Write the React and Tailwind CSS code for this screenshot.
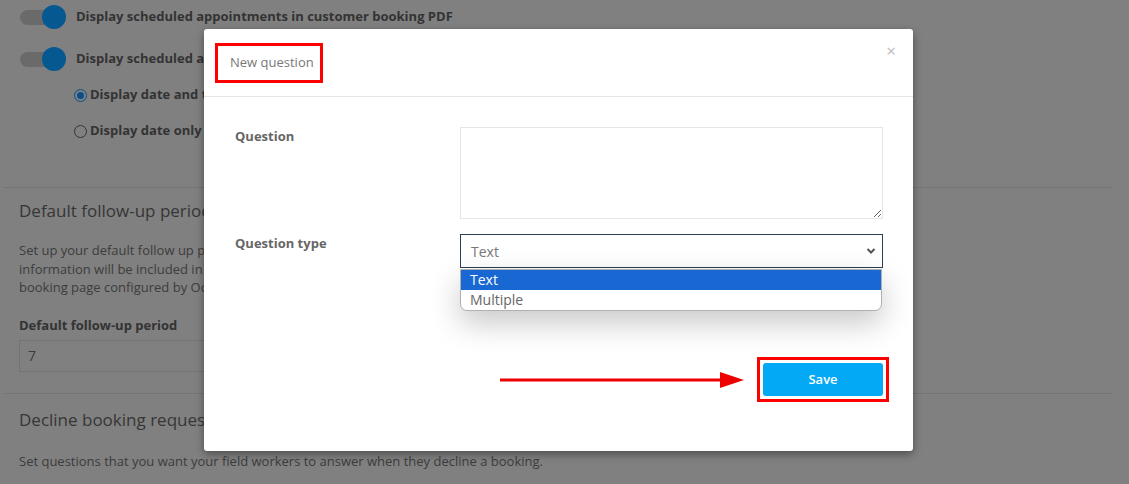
import React from "react";

const font = { fontFamily: '"Open Sans", "Noto Sans", sans-serif' };

const Toggle = () => (
  <div className="relative h-[24px] w-[46px] shrink-0">
    <div className="absolute left-0 top-[5px] h-[15px] w-[40px] rounded-full bg-[#6a6a6a]" />
    <div className="absolute right-0 top-0 h-[24px] w-[24px] rounded-full bg-[#065891]" />
  </div>
);

const Background = () => (
  <div className="pr-4 text-[13px] text-[#363636]">
    <div className="flex h-[34px] items-center gap-[10px] pl-[20px]">
      <Toggle />
      <span className="font-bold text-[#333]">
        Display scheduled appointments in customer booking PDF
      </span>
    </div>
    <div className="mt-[8px] flex h-[34px] items-center gap-[10px] pl-[20px]">
      <Toggle />
      <span className="font-bold text-[#333]">
        Display scheduled appointments in customer booking page
      </span>
    </div>
    <div className="mt-[7px] flex h-[24px] items-center gap-[3px] pl-[74px]">
      <span className="flex h-[13px] w-[13px] items-center justify-center rounded-full border border-[#0a4d8c]">
        <span className="h-[7px] w-[7px] rounded-full bg-[#0a4d8c]" />
      </span>
      <span className="font-bold text-[#333]">Display date and time</span>
    </div>
    <div className="mt-[12px] flex h-[24px] items-center gap-[3px] pl-[74px]">
      <span className="h-[13px] w-[13px] rounded-full border border-[#333]" />
      <span className="font-bold text-[#333]">Display date only</span>
    </div>
    <div className="ml-[4px] mt-[44px] h-px bg-[#747474]" />
    <div className="pl-[19px]">
      <h2 className="mt-[11px] text-[17px] leading-[24px] text-[#363636]">
        Default follow-up period
      </h2>
      <p className="mt-[18px] leading-[18.5px] text-[#3c3c3c]">
        Set up your default follow up period in days for new customer bookings. This
        <br />
        information will be included in the customer booking PDF and in the online
        <br />
        booking page configured by OctopusPro.
      </p>
      <div className="mt-[19px] font-bold leading-[18px] text-[#333]">
        Default follow-up period
      </div>
      <div className="mt-[6px] flex h-[32px] w-[400px] items-center border border-[#747474] px-[8px] text-[14px] text-[#3c3c3c]">
        7
      </div>
    </div>
    <div className="ml-[4px] mt-[21px] h-px bg-[#747474]" />
    <div className="pl-[19px]">
      <h2 className="mt-[14px] text-[17px] leading-[24px] text-[#363636]">
        Decline booking request questions
      </h2>
      <p className="mt-[20px] leading-[18px] text-[#3c3c3c]">
        Set questions that you want your field workers to answer when they decline a booking.
      </p>
      <p className="mt-[11px] leading-[18px] text-[#3c3c3c]">
        Ex: Why did you decline this booking?
      </p>
    </div>
  </div>
);

const Modal = () => (
  <div className="absolute left-[204px] top-[29px] h-[422px] w-[709px] rounded-[3px] bg-white shadow-[0_3px_9px_rgba(0,0,0,0.4)]">
    <div className="relative border-b border-[#e5e5e5] pb-[13px] pl-[11px] pt-[14px]">
      <div className="flex h-[40px] w-[108px] items-center border-[3px] border-[#ff0000] pl-[12px] text-[13px] text-[#777]">
        New question
      </div>
      <span className="absolute right-[17px] top-[13px] text-[17px] leading-none text-[#bbb]">
        ×
      </span>
    </div>
    <div className="pl-[31px] pr-[30px] pt-[30px]">
      <div className="flex">
        <label className="w-[225px] shrink-0 text-[13px] font-bold leading-[18px] text-[#666]">
          Question
        </label>
        <textarea className="h-[92px] flex-1 border border-[#e5e5e5] outline-none" />
      </div>
      <div className="mt-[15px] flex">
        <label className="w-[225px] shrink-0 text-[13px] font-bold leading-[18px] text-[#666]">
          Question type
        </label>
        <div className="relative flex-1">
          <div className="flex h-[34px] items-center justify-between border border-[#2c3e50] pl-[10px] pr-[6px] text-[14px] text-[#777]">
            <span>Text</span>
            <svg width="10" height="8" viewBox="0 0 10 8">
              <path d="M1.5 2l3.5 3.5L8.5 2" fill="none" stroke="#555" strokeWidth="2" />
            </svg>
          </div>
          <div className="absolute left-0 right-[1px] top-[35px] overflow-hidden rounded-b-[7px] border border-[#b0b0b0] bg-white text-[14px] leading-[20px] shadow-[0_12px_30px_rgba(0,0,0,0.22)]">
            <div className="bg-[#1967d2] pl-[9px] text-white">Text</div>
            <div className="pl-[9px] text-[#666]">Multiple</div>
          </div>
        </div>
      </div>
    </div>
    <div className="mt-[89px] flex items-center justify-end gap-[13px] pr-[24px]">
      <svg width="244" height="16" viewBox="0 0 244 16">
        <line x1="0" y1="8" x2="224" y2="8" stroke="#ee0000" strokeWidth="3" />
        <polygon points="220,0 244,8 220,16" fill="#ee0000" />
      </svg>
      <div className="border-[3px] border-[#ff0000] p-[3px]">
        <button className="h-[33px] w-[120px] rounded-[3px] bg-[#03a9f4] text-[13px] font-semibold text-white">
          Save
        </button>
      </div>
    </div>
  </div>
);

export default function App() {
  return (
    <div className="relative h-[484px] w-full overflow-hidden bg-[#808080]" style={font}>
      <Background />
      <Modal />
    </div>
  );
}
